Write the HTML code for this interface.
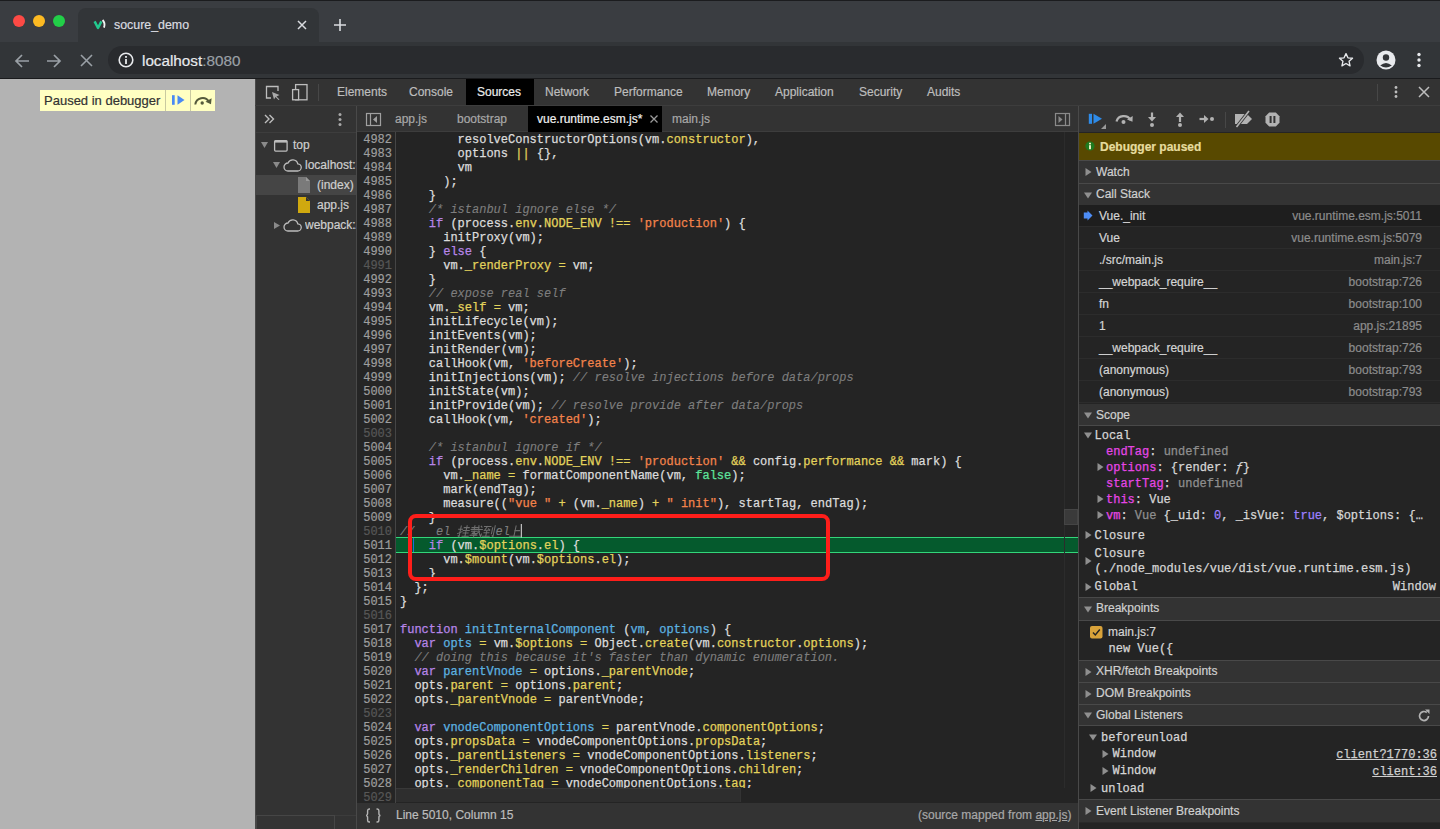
<!DOCTYPE html><html><head><meta charset="utf-8"><style>*{margin:0;padding:0;box-sizing:border-box}
html,body{width:1440px;height:829px;overflow:hidden;background:#242424;font-family:"Liberation Sans",sans-serif;font-size:12px;position:relative;-webkit-text-stroke:0.2px currentColor}
.a{position:absolute}
.mono{font-family:"Liberation Mono",monospace;-webkit-text-stroke:0.25px currentColor}
svg{position:absolute;overflow:visible}
/* chrome */
#frame{left:0;top:0;width:1440px;height:42px;background:#3a3d41;border-top:1px solid #1b1c1e}
.tl{position:absolute;top:15px;width:12px;height:12px;border-radius:50%}
#tab{left:78px;top:8px;width:241px;height:34px;background:#323538;border-radius:8px 8px 0 0}
#tabtitle{left:114px;top:17px;font-size:12.4px;color:#dadce0;line-height:16px;white-space:nowrap}
#tb{left:0;top:42px;width:1440px;height:37px;background:#323538;border-bottom:1px solid #1a1b1d}
#omni{left:108px;top:46px;width:1256px;height:28px;background:#292b2e;border-radius:14px}
#url{left:142px;top:51.5px;font-size:15.25px;line-height:18px;color:#e8eaed;white-space:nowrap}
#url span{color:#9aa0a6}
/* page */
#page{left:0;top:79px;width:255px;height:750px;background:#b3b3b3}
#badge{left:40px;top:90px;width:175px;height:21px;background:#ffffc2}
#badgetxt{left:44px;top:93px;font-size:13px;line-height:15px;color:#333;white-space:nowrap}
/* devtools */
#dt{left:255px;top:79px;width:1185px;height:750px;background:#242424}
.bar{background:#333333}
.tabt{position:absolute;top:85px;line-height:14px;color:#bdbdbd;white-space:nowrap}
.etab{position:absolute;top:112px;line-height:14px;color:#a8a8a8;white-space:nowrap}
.nav{position:absolute;line-height:14px;color:#cfcfcf;white-space:nowrap}
/* code */
#gutter{left:357px;top:132px;width:39px;height:671px;background:#252525;border-right:1px solid #454545;overflow:hidden}
#code{left:396px;top:132px;width:682px;height:671px;background:#242424;overflow:hidden}
.ln{position:absolute;left:0;width:35px;text-align:right;font-family:"Liberation Mono",monospace;font-size:12px;line-height:14px;height:14px;color:#9e9e9e;-webkit-text-stroke:0.2px currentColor}
.ln.dim{color:#575757}
.cl{position:absolute;left:4px;font-family:"Liberation Mono",monospace;font-size:12px;line-height:14px;height:14px;white-space:pre;color:#dcdcdc;-webkit-text-stroke:0.25px currentColor}
.k{color:#b785e8}
.p{color:#e3d35c}
.o{color:#e3d35c}
.s{color:#f3834b}
.c{color:#7e7e7e;font-style:italic;-webkit-text-stroke:0.1px currentColor}
.d{color:#5cb2e0}
.t{color:#5ee39b}
.cjk{display:inline-block;width:38px;height:14px;vertical-align:top}
</style></head><body>
<div id="frame" class="a"></div>
<div class="tl" style="left:13px;background:#fd4a45"></div>
<div class="tl" style="left:33px;background:#fdba22"></div>
<div class="tl" style="left:53px;background:#22cf48"></div>
<div id="tab" class="a"></div>
<svg style="left:93px;top:20px" width="14" height="10" viewBox="0 0 14 10"><path d="M1.6 1.4L5 8L8.4 1.4" fill="none" stroke="#22c98f" stroke-width="2.5" stroke-linejoin="round"/><path d="M9.6 0Q12.6 3.2 11 7.6" fill="none" stroke="#f2f2f2" stroke-width="1.9"/></svg>
<div id="tabtitle" class="a">socure_demo</div>
<svg style="left:297px;top:20px" width="10" height="10"><path d="M1 1L9 9M9 1L1 9" stroke="#dadce0" stroke-width="1.5"/></svg>
<svg style="left:333px;top:18px" width="14" height="14"><path d="M7 1V13M1 7H13" stroke="#dadce0" stroke-width="1.6"/></svg>
<div id="tb" class="a"></div>
<svg style="left:14px;top:53px" width="16" height="16"><path d="M15 8H2M8 2L2 8L8 14" fill="none" stroke="#9aa0a6" stroke-width="1.7"/></svg>
<svg style="left:46px;top:53px" width="16" height="16"><path d="M1 8H14M8 2L14 8L8 14" fill="none" stroke="#9aa0a6" stroke-width="1.7"/></svg>
<svg style="left:80px;top:54px" width="13" height="13"><path d="M1 1L12 12M12 1L1 12" stroke="#9aa0a6" stroke-width="1.6"/></svg>
<div id="omni" class="a"></div>
<svg style="left:118px;top:52px" width="16" height="16"><circle cx="8" cy="8" r="6.8" fill="none" stroke="#e8eaed" stroke-width="1.6"/><rect x="7.1" y="7" width="1.8" height="5" fill="#e8eaed"/><rect x="7.1" y="4" width="1.8" height="1.8" fill="#e8eaed"/></svg>
<div id="url" class="a">localhost<span>:8080</span></div>
<svg style="left:1337px;top:51px" width="18" height="18" viewBox="0 0 24 24"><path d="M12 3.5l2.6 5.6 6.1.6-4.6 4.1 1.3 6-5.4-3.1-5.4 3.1 1.3-6-4.6-4.1 6.1-.6z" fill="none" stroke="#e8eaed" stroke-width="1.8" stroke-linejoin="round"/></svg>
<svg style="left:1376px;top:50px" width="20" height="20"><circle cx="10" cy="10" r="9.5" fill="#e8eaed"/><circle cx="10" cy="7.5" r="3.2" fill="#323538"/><path d="M4.2 15.5 Q10 10.5 15.8 15.5 Q10 19.5 4.2 15.5z" fill="#323538"/></svg>
<svg style="left:1416px;top:52px" width="6" height="16"><circle cx="3" cy="2.5" r="1.7" fill="#e8eaed"/><circle cx="3" cy="8" r="1.7" fill="#e8eaed"/><circle cx="3" cy="13.5" r="1.7" fill="#e8eaed"/></svg>
<div id="page" class="a"></div>
<div id="badge" class="a"></div>
<div id="badgetxt" class="a">Paused in debugger</div>
<div class="a" style="left:165px;top:90px;width:1px;height:21px;background:#c9c9a0"></div>
<div class="a" style="left:190px;top:90px;width:1px;height:21px;background:#c9c9a0"></div>
<svg style="left:172px;top:95px" width="14" height="11"><rect x="0" y="0.2" width="2.7" height="9.6" fill="#4a8af4"/><path d="M5.5 0.2L12.5 5L5.5 9.8z" fill="#4a8af4"/></svg>
<svg style="left:194px;top:94px" width="19" height="12" viewBox="0 0 19 12"><path d="M1.3 10.5A7.3 7.3 0 0 1 14.8 7.5" fill="none" stroke="#555a3c" stroke-width="2"/><path d="M11.5 7.8L17 10.3L17.6 4.2z" fill="#555a3c"/><circle cx="8.2" cy="9" r="1.7" fill="#555a3c"/></svg>

<div id="dt" class="a"></div>
<!-- main toolbar -->
<div class="a bar" style="left:255px;top:79px;width:1185px;height:26px;border-left:1px solid #494949"></div>
<div class="a" style="left:255px;top:105px;width:1185px;height:1px;background:#3d3d3d"></div>
<svg style="left:265px;top:85px" width="16" height="16"><path d="M6 13H1.5V1.5H13V6" fill="none" stroke="#bdbdbd" stroke-width="1.3"/><path d="M7 7L14.5 10L11.5 11.5L14.5 14.5L13.5 15L10.5 12L9 14.5z" fill="#a9a9a9"/></svg>
<svg style="left:291px;top:83px" width="18" height="18"><rect x="4.6" y="1.6" width="11.4" height="15.2" fill="none" stroke="#bdbdbd" stroke-width="1.3"/><rect x="1.6" y="6.6" width="6" height="10.2" fill="#333" stroke="#bdbdbd" stroke-width="1.3"/></svg>
<div class="a" style="left:318px;top:84px;width:1px;height:17px;background:#474747"></div>
<div class="a" style="left:466px;top:79px;width:68px;height:26px;background:#000"></div>
<div class="tabt" style="left:337px">Elements</div>
<div class="tabt" style="left:409px">Console</div>
<div class="tabt" style="left:477px;color:#ececec">Sources</div>
<div class="tabt" style="left:545px">Network</div>
<div class="tabt" style="left:614px">Performance</div>
<div class="tabt" style="left:707px">Memory</div>
<div class="tabt" style="left:775px">Application</div>
<div class="tabt" style="left:859px">Security</div>
<div class="tabt" style="left:927px">Audits</div>
<div class="a" style="left:1377px;top:84px;width:1px;height:17px;background:#474747"></div>
<svg style="left:1393px;top:85px" width="6" height="14"><circle cx="3" cy="2.5" r="1.4" fill="#bdbdbd"/><circle cx="3" cy="7" r="1.4" fill="#bdbdbd"/><circle cx="3" cy="11.5" r="1.4" fill="#bdbdbd"/></svg>
<svg style="left:1418px;top:86px" width="12" height="12"><path d="M1 1L11 11M11 1L1 11" stroke="#bdbdbd" stroke-width="1.5"/></svg>

<!-- navigator -->
<div class="a bar" style="left:255px;top:106px;width:102px;height:723px;background:#333;border-left:1px solid #494949"></div>
<div class="a" style="left:256px;top:132px;width:101px;height:1px;background:#3d3d3d"></div>
<svg style="left:264px;top:114px" width="11" height="10"><path d="M1 1L5 5L1 9M5.5 1L9.5 5L5.5 9" fill="none" stroke="#bdbdbd" stroke-width="1.4"/></svg>
<svg style="left:337px;top:112px" width="6" height="14"><circle cx="3" cy="2.5" r="1.5" fill="#a8a8a8"/><circle cx="3" cy="7.5" r="1.5" fill="#a8a8a8"/><circle cx="3" cy="12.5" r="1.5" fill="#a8a8a8"/></svg>
<div class="a" style="left:256px;top:175px;width:101px;height:20px;background:#454545"></div>
<svg style="left:261px;top:142px" width="8" height="6"><path d="M0 0H7L3.5 6z" fill="#8a8a8a"/></svg>
<svg style="left:273px;top:139px" width="16" height="13"><rect x="1.6" y="1.6" width="12.5" height="10.5" rx="1" fill="none" stroke="#bdbdbd" stroke-width="1.3"/><rect x="1.6" y="1.6" width="12.5" height="2" fill="#bdbdbd"/></svg>
<div class="nav" style="left:293px;top:138px">top</div>
<svg style="left:273px;top:162px" width="8" height="6"><path d="M0 0H7L3.5 6z" fill="#8a8a8a"/></svg>
<svg style="left:283px;top:158px" width="19" height="14" viewBox="0 0 19 14"><path d="M5 13H14.5A3.6 3.6 0 0 0 14.8 5.8A5.2 5.2 0 0 0 5 5A4 4 0 0 0 5 13z" fill="none" stroke="#bdbdbd" stroke-width="1.3"/></svg>
<div class="nav" style="left:305px;top:158px;width:52px;overflow:hidden">localhost:8080</div>
<svg style="left:298px;top:177px" width="13" height="16"><path d="M0 0H8L12 4V16H0z" fill="#7a7a7a"/><path d="M8 0L12 4H8z" fill="#9a9a9a"/></svg>
<div class="nav" style="left:317px;top:178px">(index)</div>
<svg style="left:298px;top:197px" width="13" height="16"><path d="M0 0H8L12 4V16H0z" fill="#d0a90f"/><path d="M8 0L12 4H8z" fill="#333"/></svg>
<div class="nav" style="left:317px;top:198px">app.js</div>
<svg style="left:274px;top:222px" width="6" height="8"><path d="M0 0V7L6 3.5z" fill="#8a8a8a"/></svg>
<svg style="left:283px;top:218px" width="19" height="14" viewBox="0 0 19 14"><path d="M5 13H14.5A3.6 3.6 0 0 0 14.8 5.8A5.2 5.2 0 0 0 5 5A4 4 0 0 0 5 13z" fill="none" stroke="#bdbdbd" stroke-width="1.3"/></svg>
<div class="nav" style="left:305px;top:218px;width:52px;overflow:hidden">webpack://</div>
<div class="a" style="left:256px;top:815px;width:100px;height:1px;background:#3c3c3c"></div><div class="a" style="left:256px;top:815px;width:79px;height:14px;background:#343434;border:1px solid #464646;border-bottom:0"></div>
<div class="a" style="left:356px;top:106px;width:1px;height:723px;background:#494949"></div>

<!-- editor tabs -->
<div class="a bar" style="left:357px;top:106px;width:721px;height:26px"></div>
<div class="a" style="left:357px;top:131px;width:721px;height:1px;background:#3d3d3d"></div>
<svg style="left:365px;top:112px" width="17" height="15"><rect x="1.5" y="1.5" width="14" height="12" fill="none" stroke="#a0a0a0" stroke-width="1.2"/><path d="M5.5 1.5V13.5" stroke="#a0a0a0" stroke-width="1.2"/><path d="M12 4L8 7.5L12 11z" fill="#a0a0a0"/></svg>
<div class="etab" style="left:395px">app.js</div>
<div class="etab" style="left:457px">bootstrap</div>
<div class="a" style="left:528px;top:106px;width:134px;height:26px;background:#000"></div>
<div class="etab" style="left:537px;color:#f0f0f0">vue.runtime.esm.js*</div>
<svg style="left:649px;top:114px" width="10" height="10"><path d="M1.5 1.5L8.5 8.5M8.5 1.5L1.5 8.5" stroke="#9a9a9a" stroke-width="1.3"/></svg>
<div class="etab" style="left:672px">main.js</div>
<svg style="left:1054px;top:112px" width="17" height="15"><rect x="1.5" y="1.5" width="14" height="12" fill="none" stroke="#8a8a8a" stroke-width="1.2"/><path d="M11.5 1.5V13.5" stroke="#8a8a8a" stroke-width="1.2"/><path d="M4.5 4L8.5 7.5L4.5 11z" fill="#8a8a8a"/></svg>

<!-- status bar -->
<div class="a bar" style="left:357px;top:802px;width:721px;height:27px;border-top:1px solid #494949"></div>
<svg style="left:365px;top:808px" width="17" height="15" viewBox="0 0 17 15"><path d="M5 1H4.2Q2.6 1 2.6 2.8V5.6Q2.6 7.5 1 7.5Q2.6 7.5 2.6 9.4V12.2Q2.6 14 4.2 14H5M11.5 1H12.3Q13.9 1 13.9 2.8V5.6Q13.9 7.5 15.5 7.5Q13.9 7.5 13.9 9.4V12.2Q13.9 14 12.3 14H11.5" fill="none" stroke="#b5b5b5" stroke-width="1.4"/></svg>
<div class="a" style="left:396px;top:808px;line-height:14px;color:#bdbdbd;white-space:nowrap">Line 5010, Column 15</div>
<div class="a" style="left:918px;top:808px;line-height:14px;color:#a8a8a8;white-space:nowrap">(source mapped from <span style="text-decoration:underline">app.js</span>)</div>

<div id="gutter" class="a"><div class="ln" style="top:1px">4982</div><div class="ln" style="top:15px">4983</div><div class="ln" style="top:29px">4984</div><div class="ln" style="top:43px">4985</div><div class="ln" style="top:57px">4986</div><div class="ln" style="top:71px">4987</div><div class="ln" style="top:85px">4988</div><div class="ln" style="top:99px">4989</div><div class="ln" style="top:113px">4990</div><div class="ln dim" style="top:127px">4991</div><div class="ln" style="top:141px">4992</div><div class="ln" style="top:155px">4993</div><div class="ln" style="top:169px">4994</div><div class="ln" style="top:183px">4995</div><div class="ln" style="top:197px">4996</div><div class="ln" style="top:211px">4997</div><div class="ln" style="top:225px">4998</div><div class="ln" style="top:239px">4999</div><div class="ln" style="top:253px">5000</div><div class="ln" style="top:267px">5001</div><div class="ln" style="top:281px">5002</div><div class="ln dim" style="top:295px">5003</div><div class="ln" style="top:309px">5004</div><div class="ln" style="top:323px">5005</div><div class="ln" style="top:337px">5006</div><div class="ln" style="top:351px">5007</div><div class="ln" style="top:365px">5008</div><div class="ln" style="top:379px">5009</div><div class="ln dim" style="top:393px">5010</div><div class="ln" style="top:407px">5011</div><div class="ln" style="top:421px">5012</div><div class="ln" style="top:435px">5013</div><div class="ln" style="top:449px">5014</div><div class="ln" style="top:463px">5015</div><div class="ln dim" style="top:477px">5016</div><div class="ln" style="top:491px">5017</div><div class="ln" style="top:505px">5018</div><div class="ln" style="top:519px">5019</div><div class="ln" style="top:533px">5020</div><div class="ln" style="top:547px">5021</div><div class="ln" style="top:561px">5022</div><div class="ln dim" style="top:575px">5023</div><div class="ln" style="top:589px">5024</div><div class="ln" style="top:603px">5025</div><div class="ln" style="top:617px">5026</div><div class="ln" style="top:631px">5027</div><div class="ln" style="top:645px">5028</div><div class="ln dim" style="top:659px">5029</div></div>
<div id="code" class="a"><div class="cl" style="top:1px">        resolveConstructorOptions(vm.<span class="p">constructor</span>),</div><div class="cl" style="top:15px">        options <span class="o">||</span> {},</div><div class="cl" style="top:29px">        vm</div><div class="cl" style="top:43px">      );</div><div class="cl" style="top:57px">    }</div><div class="cl" style="top:71px">    <span class="c">/* istanbul ignore else */</span></div><div class="cl" style="top:85px">    <span class="k">if</span> (process.<span class="p">env</span>.<span class="p">NODE_ENV</span> <span class="o">!==</span> <span class="s">&#x27;production&#x27;</span>) {</div><div class="cl" style="top:99px">      initProxy(vm);</div><div class="cl" style="top:113px">    } <span class="k">else</span> {</div><div class="cl" style="top:127px">      vm.<span class="p">_renderProxy</span> <span class="o">=</span> vm;</div><div class="cl" style="top:141px">    }</div><div class="cl" style="top:155px">    <span class="c">// expose real self</span></div><div class="cl" style="top:169px">    vm.<span class="p">_self</span> <span class="o">=</span> vm;</div><div class="cl" style="top:183px">    initLifecycle(vm);</div><div class="cl" style="top:197px">    initEvents(vm);</div><div class="cl" style="top:211px">    initRender(vm);</div><div class="cl" style="top:225px">    callHook(vm, <span class="s">&#x27;beforeCreate&#x27;</span>);</div><div class="cl" style="top:239px">    initInjections(vm); <span class="c">// resolve injections before data/props</span></div><div class="cl" style="top:253px">    initState(vm);</div><div class="cl" style="top:267px">    initProvide(vm); <span class="c">// resolve provide after data/props</span></div><div class="cl" style="top:281px">    callHook(vm, <span class="s">&#x27;created&#x27;</span>);</div><div class="cl" style="top:295px"></div><div class="cl" style="top:309px">    <span class="c">/* istanbul ignore if */</span></div><div class="cl" style="top:323px">    <span class="k">if</span> (process.<span class="p">env</span>.<span class="p">NODE_ENV</span> <span class="o">!==</span> <span class="s">&#x27;production&#x27;</span> <span class="o">&amp;&amp;</span> config.<span class="p">performance</span> <span class="o">&amp;&amp;</span> mark) {</div><div class="cl" style="top:337px">      vm.<span class="p">_name</span> <span class="o">=</span> formatComponentName(vm, <span class="t">false</span>);</div><div class="cl" style="top:351px">      mark(endTag);</div><div class="cl" style="top:365px">      measure((<span class="s">&quot;vue &quot;</span> <span class="o">+</span> (vm.<span class="p">_name</span>) <span class="o">+</span> <span class="s">&quot; init&quot;</span>), startTag, endTag);</div><div class="cl" style="top:379px">    }</div><div class="cl" style="top:393px"><span class="c">//   el </span><span class="cjk"></span><span class="c">el</span></div><div class="cl" style="top:407px">    <span class="k">if</span> (vm.<span class="p">$options</span>.<span class="p">el</span>) {</div><div class="cl" style="top:421px">      vm.<span class="p">$mount</span>(vm.<span class="p">$options</span>.<span class="p">el</span>);</div><div class="cl" style="top:435px">    }</div><div class="cl" style="top:449px">  };</div><div class="cl" style="top:463px">}</div><div class="cl" style="top:477px"></div><div class="cl" style="top:491px"><span class="k">function</span> <span class="d">initInternalComponent</span> (<span class="d">vm</span>, <span class="d">options</span>) {</div><div class="cl" style="top:505px">  <span class="k">var</span> <span class="d">opts</span> <span class="o">=</span> vm.<span class="p">$options</span> <span class="o">=</span> Object.<span class="p">create</span>(vm.<span class="p">constructor</span>.<span class="p">options</span>);</div><div class="cl" style="top:519px">  <span class="c">// doing this because it&#x27;s faster than dynamic enumeration.</span></div><div class="cl" style="top:533px">  <span class="k">var</span> <span class="d">parentVnode</span> <span class="o">=</span> options.<span class="p">_parentVnode</span>;</div><div class="cl" style="top:547px">  opts.<span class="p">parent</span> <span class="o">=</span> options.<span class="p">parent</span>;</div><div class="cl" style="top:561px">  opts.<span class="p">_parentVnode</span> <span class="o">=</span> parentVnode;</div><div class="cl" style="top:575px"></div><div class="cl" style="top:589px">  <span class="k">var</span> <span class="d">vnodeComponentOptions</span> <span class="o">=</span> parentVnode.<span class="p">componentOptions</span>;</div><div class="cl" style="top:603px">  opts.<span class="p">propsData</span> <span class="o">=</span> vnodeComponentOptions.<span class="p">propsData</span>;</div><div class="cl" style="top:617px">  opts.<span class="p">_parentListeners</span> <span class="o">=</span> vnodeComponentOptions.<span class="p">listeners</span>;</div><div class="cl" style="top:631px">  opts.<span class="p">_renderChildren</span> <span class="o">=</span> vnodeComponentOptions.<span class="p">children</span>;</div><div class="cl" style="top:645px">  opts.<span class="p">_componentTag</span> <span class="o">=</span> vnodeComponentOptions.<span class="p">tag</span>;</div><div class="cl" style="top:659px"></div></div>
<div class="a" style="left:396px;top:537px;width:682px;height:16px;background:#055a2d;border-top:1px solid #33d67a;border-bottom:1px solid #33d67a"></div>
<div class="a" style="left:413px;top:538px;width:1px;height:14px;background:#1a6fd6"></div>
<div class="cl a" style="left:400px;top:539px"><span class="k">    if</span> (vm.<span class="p">$options</span>.<span class="p">el</span>) {</div>
<div class="a" style="left:1064px;top:132px;width:14px;height:656px;border-left:1px solid #2c2c2c"></div>
<div class="a" style="left:1064px;top:509px;width:14px;height:16px;background:#3a3a3a;border:1px solid #454545"></div>
<div class="a" style="left:396px;top:788px;width:682px;height:14px;background:#242424"></div><div class="a" style="left:396px;top:788px;width:345px;height:14px;background:#2e2e2e;border-top:1px solid #383838;border-right:1px solid #333"></div>
<div class="a" style="left:408px;top:514px;width:422px;height:67px;border:4px solid #fe1e1a;border-radius:8px"></div>

<svg style="left:457.6px;top:525px" width="70" height="14" viewBox="0 0 70 14"><g fill="none" stroke="#6f6f6f" stroke-width="1.05" stroke-linecap="square"><g transform="translate(0.8,0) skewX(-12)"><path d="M0.8 4.3H4.6"/><path d="M2.7 1V11.5L1.6 10.8"/><path d="M0.6 8.6L4.6 6.6"/><path d="M6 2.6H11"/><path d="M8.5 0.8V5.5"/><path d="M5.6 5.5H11.6"/><path d="M6 8H11"/><path d="M8.5 6V11"/><path d="M5.6 11.2H11.8"/></g><g transform="translate(13.5,0) skewX(-12)"><path d="M1 2.6H7.8"/><path d="M3.6 0.8V4.3"/><path d="M0.6 4.4H11.8"/><path d="M1.4 6.2H7.2"/><path d="M4.2 6.2L2.4 8.6H7"/><path d="M4.6 6.8V12"/><path d="M0.8 10.3H7.6"/><path d="M7.6 0.8Q8.3 7.5 11.6 11.6L11.8 9"/><path d="M10 1.2L11 2.2"/><path d="M6.2 9.6L9.2 6.6"/></g><g transform="translate(26.2,0) skewX(-12)"><path d="M0.6 1.4H7"/><path d="M3.6 1.4L1.4 5.4L6.6 5.1"/><path d="M5.2 3.8L6.4 5.2"/><path d="M1.4 7.8H6.4"/><path d="M3.9 5.8V11"/><path d="M0.6 11.2H7.4"/><path d="M9.1 2.8V8.8"/><path d="M11.2 0.8V11.5L10.2 10.8"/></g><g transform="translate(53.5,0) skewX(-12)"><path d="M4.8 1V11.2"/><path d="M4.8 5.6H9.2"/><path d="M0.4 11.2H11.2"/></g></g><rect x="62.8" y="-1" width="1" height="13.5" fill="#e0e0e0"/></svg>
<div class="a" style="left:1079px;top:132px;width:361px;height:697px;background:#242424"></div>
<div class="a bar" style="left:1079px;top:106px;width:361px;height:26px"></div>
<div class="a" style="left:1078px;top:106px;width:1px;height:723px;background:#494949"></div>
<!-- debugger toolbar -->
<svg style="left:1088px;top:113px" width="20" height="17"><rect x="0.8" y="0.8" width="3.2" height="10" fill="#2e8be8"/><path d="M5.5 0.8L14 5.8L5.5 10.8z" fill="#2e8be8"/><path d="M18 11V16H13z" fill="#9a9a9a"/></svg>
<svg style="left:1114px;top:111px" width="20" height="15" viewBox="0 0 20 15"><path d="M2.5 10.5A7.5 7 0 0 1 16.5 9" fill="none" stroke="#b2b2b2" stroke-width="2.2"/><path d="M13 8.5L18.5 10.8L18.7 5z" fill="#b2b2b2"/><circle cx="9.5" cy="11" r="2" fill="#b2b2b2"/></svg>
<svg style="left:1146px;top:112px" width="12" height="16"><path d="M6 0.5V7" stroke="#b2b2b2" stroke-width="2.2"/><path d="M2 5L6 9.5L10 5z" fill="#b2b2b2"/><circle cx="6" cy="13" r="2" fill="#b2b2b2"/></svg>
<svg style="left:1174px;top:111px" width="12" height="16"><path d="M6 5V11" stroke="#b2b2b2" stroke-width="2.2"/><path d="M2 6L6 1.5L10 6z" fill="#b2b2b2"/><circle cx="6" cy="14" r="2" fill="#b2b2b2"/></svg>
<svg style="left:1199px;top:113px" width="16" height="12"><path d="M0.5 6H7" stroke="#b2b2b2" stroke-width="2.2"/><path d="M5 2L9.5 6L5 10z" fill="#b2b2b2"/><circle cx="13" cy="6" r="2" fill="#b2b2b2"/></svg>
<div class="a" style="left:1225px;top:112px;width:1px;height:16px;background:#474747"></div>
<svg style="left:1234px;top:110px" width="20" height="18"><path d="M1 4H13L18 9L13 14H1z" fill="#b2b2b2"/><path d="M2.5 17L15 1" stroke="#333" stroke-width="3.2"/><path d="M2.5 17L15 1" stroke="#b2b2b2" stroke-width="1.6"/></svg>
<svg style="left:1265px;top:112px" width="15" height="15"><path d="M4.2 0.5H10.8L14.5 4.2V10.8L10.8 14.5H4.2L0.5 10.8V4.2z" fill="#b2b2b2"/><rect x="4.6" y="4" width="2" height="7" fill="#333"/><rect x="8.4" y="4" width="2" height="7" fill="#333"/></svg>
<!-- paused banner -->
<div class="a" style="left:1079px;top:133px;width:361px;height:27px;background:#584900"></div>
<svg style="left:1085px;top:141px" width="10" height="10"><circle cx="5" cy="5" r="4.6" fill="#1f7a1f"/><rect x="4.1" y="4.2" width="1.8" height="4" fill="#fffbd0"/><rect x="4.1" y="1.8" width="1.8" height="1.6" fill="#fffbd0"/></svg>
<div class="a" style="left:1100px;top:139.5px;line-height:14px;font-weight:bold;color:#e6dc9e;white-space:nowrap">Debugger paused</div>
<div class="a" style="left:1079px;top:160px;width:361px;height:1px;background:#494949"></div>
<div class="a bar" style="left:1079px;top:161px;width:361px;height:22px"></div>
<div class="a" style="left:1079px;top:183px;width:361px;height:1px;background:#494949"></div>
<svg style="left:1085px;top:168.0px" width="7" height="8"><path d="M0.5 0V8L6.5 4z" fill="#8f8f8f"/></svg>
<div class="a" style="left:1096px;top:165.04px;line-height:14px;color:#d0d0d0;white-space:nowrap">Watch</div>

<div class="a bar" style="left:1079px;top:184px;width:361px;height:21px"></div>
<div class="a" style="left:1079px;top:205px;width:361px;height:1px;background:#494949"></div>
<svg style="left:1084px;top:191.5px" width="8" height="7"><path d="M0 0.5H8L4 6.5z" fill="#8f8f8f"/></svg>
<div class="a" style="left:1096px;top:186.74px;line-height:14px;color:#d0d0d0;white-space:nowrap">Call Stack</div>

<div class="a" style="left:1079px;top:205px;width:361px;height:22px;background:#1e1e1e"></div>
<svg style="left:1083px;top:210px" width="10" height="11"><path d="M0.8 2.5H4.5V0.5L9.5 5.5L4.5 10.5V8.5H0.8z" fill="#4d8df7"/></svg>
<div class="a" style="left:1079px;top:226px;width:361px;height:1px;background:#2c2c2c"></div>
<div class="a" style="left:1099px;top:208.64px;line-height:14px;color:#d4d4d4;white-space:nowrap">Vue._init</div>
<div class="a" style="right:18px;top:208.64px;line-height:14px;color:#8c8c8c;white-space:nowrap">vue.runtime.esm.js:5011</div>
<div class="a" style="left:1079px;top:248px;width:361px;height:1px;background:#2c2c2c"></div>
<div class="a" style="left:1099px;top:230.64px;line-height:14px;color:#d4d4d4;white-space:nowrap">Vue</div>
<div class="a" style="right:18px;top:230.64px;line-height:14px;color:#8c8c8c;white-space:nowrap">vue.runtime.esm.js:5079</div>
<div class="a" style="left:1079px;top:270px;width:361px;height:1px;background:#2c2c2c"></div>
<div class="a" style="left:1099px;top:252.64px;line-height:14px;color:#d4d4d4;white-space:nowrap">./src/main.js</div>
<div class="a" style="right:18px;top:252.64px;line-height:14px;color:#8c8c8c;white-space:nowrap">main.js:7</div>
<div class="a" style="left:1079px;top:292px;width:361px;height:1px;background:#2c2c2c"></div>
<div class="a" style="left:1099px;top:274.64px;line-height:14px;color:#d4d4d4;white-space:nowrap">__webpack_require__</div>
<div class="a" style="right:18px;top:274.64px;line-height:14px;color:#8c8c8c;white-space:nowrap">bootstrap:726</div>
<div class="a" style="left:1079px;top:314px;width:361px;height:1px;background:#2c2c2c"></div>
<div class="a" style="left:1099px;top:296.64px;line-height:14px;color:#d4d4d4;white-space:nowrap">fn</div>
<div class="a" style="right:18px;top:296.64px;line-height:14px;color:#8c8c8c;white-space:nowrap">bootstrap:100</div>
<div class="a" style="left:1079px;top:336px;width:361px;height:1px;background:#2c2c2c"></div>
<div class="a" style="left:1099px;top:318.64px;line-height:14px;color:#d4d4d4;white-space:nowrap">1</div>
<div class="a" style="right:18px;top:318.64px;line-height:14px;color:#8c8c8c;white-space:nowrap">app.js:21895</div>
<div class="a" style="left:1079px;top:358px;width:361px;height:1px;background:#2c2c2c"></div>
<div class="a" style="left:1099px;top:340.64px;line-height:14px;color:#d4d4d4;white-space:nowrap">__webpack_require__</div>
<div class="a" style="right:18px;top:340.64px;line-height:14px;color:#8c8c8c;white-space:nowrap">bootstrap:726</div>
<div class="a" style="left:1079px;top:380px;width:361px;height:1px;background:#2c2c2c"></div>
<div class="a" style="left:1099px;top:362.64px;line-height:14px;color:#d4d4d4;white-space:nowrap">(anonymous)</div>
<div class="a" style="right:18px;top:362.64px;line-height:14px;color:#8c8c8c;white-space:nowrap">bootstrap:793</div>
<div class="a" style="left:1079px;top:402px;width:361px;height:1px;background:#2c2c2c"></div>
<div class="a" style="left:1099px;top:384.64px;line-height:14px;color:#d4d4d4;white-space:nowrap">(anonymous)</div>
<div class="a" style="right:18px;top:384.64px;line-height:14px;color:#8c8c8c;white-space:nowrap">bootstrap:793</div>
<div class="a bar" style="left:1079px;top:404px;width:361px;height:21px"></div>
<div class="a" style="left:1079px;top:425px;width:361px;height:1px;background:#494949"></div>
<svg style="left:1084px;top:411.5px" width="8" height="7"><path d="M0 0.5H8L4 6.5z" fill="#8f8f8f"/></svg>
<div class="a" style="left:1096px;top:407.74px;line-height:14px;color:#d0d0d0;white-space:nowrap">Scope</div>

<svg style="left:1084.0px;top:432.0px" width="8" height="7"><path d="M0 0.5H8L4 6.5z" fill="#8f8f8f"/></svg>
<div class="a mono" style="left:1094.5px;top:428.70px;font-size:12px;line-height:14px;color:#d6d6d6;white-space:pre">Local</div>
<div class="a mono" style="left:1106px;top:444.80px;font-size:12px;line-height:14px;color:#d6d6d6;white-space:pre"><span style="color:#e646e6">endTag</span>: <span style="color:#8f8f8f">undefined</span></div>
<svg style="left:1097.0px;top:463.0px" width="7" height="8"><path d="M0.5 0V8L6.5 4z" fill="#8f8f8f"/></svg>
<div class="a mono" style="left:1106px;top:460.80px;font-size:12px;line-height:14px;color:#d6d6d6;white-space:pre"><span style="color:#e646e6">options</span>: {render: <i>ƒ</i>}</div>
<div class="a mono" style="left:1106px;top:476.80px;font-size:12px;line-height:14px;color:#d6d6d6;white-space:pre"><span style="color:#e646e6">startTag</span>: <span style="color:#8f8f8f">undefined</span></div>
<svg style="left:1097.0px;top:495.0px" width="7" height="8"><path d="M0.5 0V8L6.5 4z" fill="#8f8f8f"/></svg>
<div class="a mono" style="left:1106px;top:492.80px;font-size:12px;line-height:14px;color:#d6d6d6;white-space:pre"><span style="color:#e646e6">this</span>: Vue</div>
<svg style="left:1097.0px;top:511.0px" width="7" height="8"><path d="M0.5 0V8L6.5 4z" fill="#8f8f8f"/></svg>
<div class="a mono" style="left:1106px;top:508.80px;font-size:12px;line-height:14px;color:#d6d6d6;white-space:pre"><span style="color:#e646e6">vm</span>: <span style="color:#8f8f8f">Vue</span> {_uid: <span style="color:#9d80ff">0</span>, _isVue: <span style="color:#9d80ff">true</span>, $options: {…</div>
<svg style="left:1085.0px;top:531.0px" width="7" height="8"><path d="M0.5 0V8L6.5 4z" fill="#8f8f8f"/></svg>
<div class="a mono" style="left:1094.5px;top:528.60px;font-size:12px;line-height:14px;color:#d6d6d6;white-space:pre">Closure</div>
<svg style="left:1085.0px;top:557.0px" width="7" height="8"><path d="M0.5 0V8L6.5 4z" fill="#8f8f8f"/></svg>
<div class="a mono" style="left:1094.5px;top:547.40px;font-size:12px;line-height:14px;color:#d6d6d6;white-space:pre">Closure</div>
<div class="a mono" style="left:1094.5px;top:561.90px;font-size:12px;line-height:14px;color:#d6d6d6;white-space:pre">(./node_modules/vue/dist/vue.runtime.esm.js)</div>
<svg style="left:1085.0px;top:583.0px" width="7" height="8"><path d="M0.5 0V8L6.5 4z" fill="#8f8f8f"/></svg>
<div class="a mono" style="left:1094.5px;top:580.40px;font-size:12px;line-height:14px;color:#d6d6d6;white-space:pre">Global</div>
<div class="a mono" style="right:4px;top:580.40px;font-size:12px;line-height:14px;color:#d6d6d6">Window</div>
<div class="a" style="left:1079px;top:597px;width:361px;height:1px;background:#494949"></div>
<div class="a bar" style="left:1079px;top:598px;width:361px;height:22px"></div>
<div class="a" style="left:1079px;top:620px;width:361px;height:1px;background:#494949"></div>
<svg style="left:1084px;top:606.0px" width="8" height="7"><path d="M0 0.5H8L4 6.5z" fill="#8f8f8f"/></svg>
<div class="a" style="left:1096px;top:601.14px;line-height:14px;color:#d0d0d0;white-space:nowrap">Breakpoints</div>

<svg style="left:1090px;top:626px" width="13" height="13"><rect x="0" y="0" width="12.5" height="12.5" rx="2" fill="#d8a23a"/><path d="M3 6.5L5.3 9L9.8 3.5" fill="none" stroke="#222" stroke-width="1.4"/></svg>
<div class="a" style="left:1108px;top:624.74px;line-height:14px;color:#d4d4d4;white-space:nowrap">main.js:7</div>
<div class="a mono" style="left:1108.5px;top:642.20px;font-size:12px;line-height:14px;color:#d6d6d6;white-space:pre">new Vue({</div>
<div class="a" style="left:1079px;top:660px;width:361px;height:1px;background:#494949"></div>
<div class="a bar" style="left:1079px;top:661px;width:361px;height:21px"></div>
<div class="a" style="left:1079px;top:682px;width:361px;height:1px;background:#494949"></div>
<svg style="left:1085px;top:667.5px" width="7" height="8"><path d="M0.5 0V8L6.5 4z" fill="#8f8f8f"/></svg>
<div class="a" style="left:1096px;top:663.94px;line-height:14px;color:#d0d0d0;white-space:nowrap">XHR/fetch Breakpoints</div>

<div class="a bar" style="left:1079px;top:683px;width:361px;height:21px"></div>
<div class="a" style="left:1079px;top:704px;width:361px;height:1px;background:#494949"></div>
<svg style="left:1085px;top:689.5px" width="7" height="8"><path d="M0.5 0V8L6.5 4z" fill="#8f8f8f"/></svg>
<div class="a" style="left:1096px;top:685.84px;line-height:14px;color:#d0d0d0;white-space:nowrap">DOM Breakpoints</div>

<div class="a bar" style="left:1079px;top:705px;width:361px;height:20px"></div>
<div class="a" style="left:1079px;top:725px;width:361px;height:1px;background:#494949"></div>
<svg style="left:1084px;top:712.0px" width="8" height="7"><path d="M0 0.5H8L4 6.5z" fill="#8f8f8f"/></svg>
<div class="a" style="left:1096px;top:707.84px;line-height:14px;color:#d0d0d0;white-space:nowrap">Global Listeners</div>
<svg style="left:1417px;top:709px" width="14" height="14" viewBox="0 0 14 14"><path d="M11.5 7A4.5 4.5 0 1 1 9.8 3.5" fill="none" stroke="#b2b2b2" stroke-width="1.7"/><path d="M8 0.5H12.5V5z" fill="#b2b2b2"/></svg>
<svg style="left:1089.0px;top:734.0px" width="8" height="7"><path d="M0 0.5H8L4 6.5z" fill="#8f8f8f"/></svg>
<div class="a mono" style="left:1101px;top:730.60px;font-size:12px;line-height:14px;color:#d6d6d6;white-space:pre">beforeunload</div>
<svg style="left:1102.0px;top:750.0px" width="7" height="8"><path d="M0.5 0V8L6.5 4z" fill="#8f8f8f"/></svg>
<div class="a mono" style="left:1112.5px;top:747.30px;font-size:12px;line-height:14px;color:#d6d6d6;white-space:pre">Window</div>
<div class="a mono" style="right:3px;top:748.00px;font-size:12px;line-height:14px;color:#cfcfcf;text-decoration:underline">client?1770:36</div>
<svg style="left:1102.0px;top:767.0px" width="7" height="8"><path d="M0.5 0V8L6.5 4z" fill="#8f8f8f"/></svg>
<div class="a mono" style="left:1112.5px;top:764.10px;font-size:12px;line-height:14px;color:#d6d6d6;white-space:pre">Window</div>
<div class="a mono" style="right:3px;top:764.80px;font-size:12px;line-height:14px;color:#cfcfcf;text-decoration:underline">client:36</div>
<svg style="left:1089.5px;top:784.0px" width="7" height="8"><path d="M0.5 0V8L6.5 4z" fill="#8f8f8f"/></svg>
<div class="a mono" style="left:1101px;top:781.50px;font-size:12px;line-height:14px;color:#d6d6d6;white-space:pre">unload</div>
<div class="a" style="left:1079px;top:799px;width:361px;height:1px;background:#494949"></div>
<div class="a bar" style="left:1079px;top:800px;width:361px;height:22px"></div>
<div class="a" style="left:1079px;top:822px;width:361px;height:1px;background:#2a2a2a"></div>
<svg style="left:1085px;top:807.0px" width="7" height="8"><path d="M0.5 0V8L6.5 4z" fill="#8f8f8f"/></svg>
<div class="a" style="left:1096px;top:804.24px;line-height:14px;color:#d0d0d0;white-space:nowrap">Event Listener Breakpoints</div>

</body></html>
